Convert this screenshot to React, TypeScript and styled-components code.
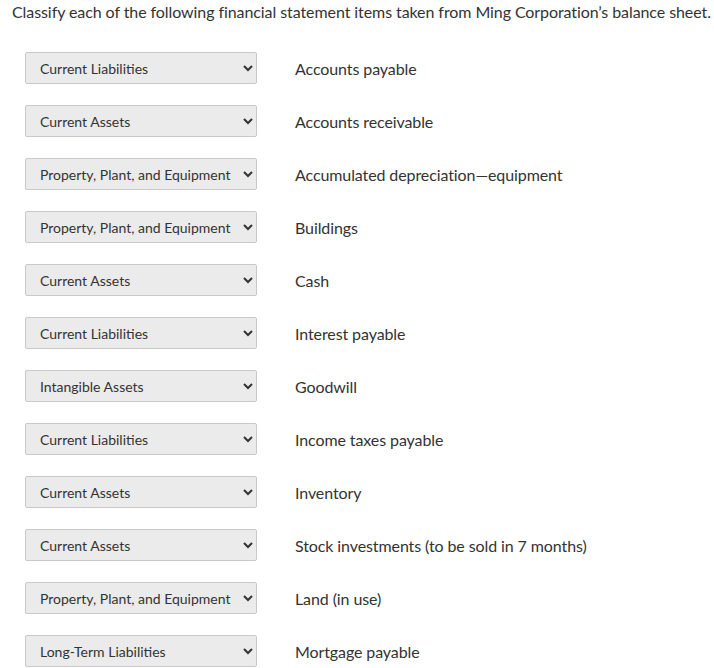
import React from "react";
import styled, { createGlobalStyle } from "styled-components";

const Global = createGlobalStyle`
  html, body { margin: 0; padding: 0; background: #fff; }
  body { font-family: Lato, "Open Sans", sans-serif; color: #333; }
`;

const Page = styled.div`
  padding: 0 12px;
`;

const Title = styled.p`
  margin: 0;
  padding-top: 2px;
  font-size: 16px;
  line-height: 20px;
  letter-spacing: -0.08px;
  color: #333;
  white-space: nowrap;
`;

const List = styled.div`
  display: flex;
  flex-direction: column;
  gap: 21px;
  padding: 30px 0 0 13px;
`;

const Row = styled.div`
  display: flex;
  align-items: center;
  gap: 38px;
`;

const Select = styled.select`
  width: 232px;
  height: 32px;
  box-sizing: border-box;
  background-color: #ebebeb;
  border: 1px solid #c9c9c9;
  border-radius: 2px;
  padding: 0 6px 0 10px;
  font-family: Lato, "Open Sans", sans-serif;
  font-size: 14px;
  color: #333;
  flex: none;
`;

const Label = styled.span`
  font-size: 16px;
  letter-spacing: -0.1px;
  color: #333;
`;

const options = [
  "Current Assets",
  "Current Liabilities",
  "Intangible Assets",
  "Long-Term Investments",
  "Long-Term Liabilities",
  "Property, Plant, and Equipment",
  "Stockholders' Equity",
];

const rows: [string, string][] = [
  ["Current Liabilities", "Accounts payable"],
  ["Current Assets", "Accounts receivable"],
  ["Property, Plant, and Equipment", "Accumulated depreciation\u2014equipment"],
  ["Property, Plant, and Equipment", "Buildings"],
  ["Current Assets", "Cash"],
  ["Current Liabilities", "Interest payable"],
  ["Intangible Assets", "Goodwill"],
  ["Current Liabilities", "Income taxes payable"],
  ["Current Assets", "Inventory"],
  ["Current Assets", "Stock investments (to be sold in 7 months)"],
  ["Property, Plant, and Equipment", "Land (in use)"],
  ["Long-Term Liabilities", "Mortgage payable"],
];

export default function App() {
  return (
    <Page>
      <Global />
      <Title>
        Classify each of the following financial statement items taken from Ming Corporation’s balance sheet.
      </Title>
      <List>
        {rows.map(([val, label], i) => (
          <Row key={i}>
            <Select defaultValue={val}>
              {options.map((o) => (
                <option key={o} value={o}>
                  {o}
                </option>
              ))}
            </Select>
            <Label>{label}</Label>
          </Row>
        ))}
      </List>
    </Page>
  );
}
